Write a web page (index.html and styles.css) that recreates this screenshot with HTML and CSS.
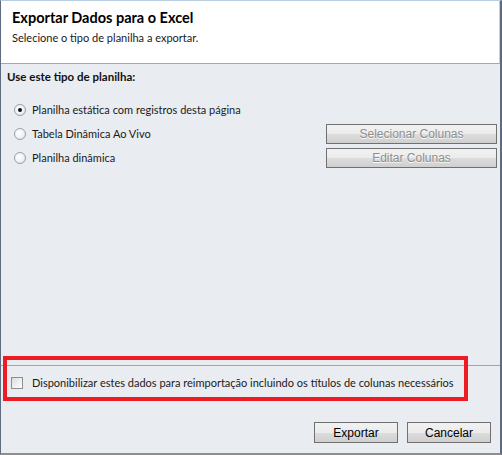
FILE: index.html
```html
<!DOCTYPE html>
<html lang="pt">
<head>
<meta charset="utf-8">
<title>Exportar Dados para o Excel</title>
<link rel="stylesheet" href="styles.css">
</head>
<body>
<div class="dialog">
  <div class="header">
    <div class="title">Exportar Dados para o Excel</div>
    <div class="subtitle">Selecione o tipo de planilha a exportar.</div>
  </div>
  <div class="main">
    <div class="section-label">Use este tipo de planilha:</div>
    <div class="options">
      <div class="option">
        <span class="radio checked"></span>
        <span class="opt-text">Planilha estática com registros desta página</span>
      </div>
      <div class="option">
        <span class="radio"></span>
        <span class="opt-text">Tabela Dinâmica Ao Vivo</span>
        <button class="btn side" disabled>Selecionar Colunas</button>
      </div>
      <div class="option">
        <span class="radio"></span>
        <span class="opt-text">Planilha dinâmica</span>
        <button class="btn side" disabled>Editar Colunas</button>
      </div>
    </div>
  </div>
  <div class="reimport">
    <span class="checkbox"></span>
    <span class="opt-text">Disponibilizar estes dados para reimportação incluindo os títulos de colunas necessários</span>
    <div class="highlight"></div>
  </div>
  <div class="footer">
    <button class="btn action">Exportar</button>
    <button class="btn action">Cancelar</button>
  </div>
</div>
</body>
</html>
```
FILE: styles.css
```css
html, body {
  margin: 0;
  padding: 0;
  background: #e9ecf0;
}

.dialog {
  box-sizing: border-box;
  width: 502px;
  height: 455px;
  display: flex;
  flex-direction: column;
  background: #e9ecf0;
  border-left: 1px solid #5d6b7f;
  border-right: 2px solid #5d6b7f;
  border-top: 1px solid #b9cde3;
  border-bottom: 2px solid #8e8e8e;
  font-family: Lato, "Open Sans", sans-serif;
  color: #1a1a1a;
}

.header {
  box-sizing: border-box;
  height: 63px;
  background: #ffffff;
  border-bottom: 1px solid #a0a8b2;
  border-right: 1px solid #c9ced6;
  padding: 8px 0 0 11px;
}

.title {
  font-size: 14.5px;
  font-weight: 700;
  color: #000;
  line-height: 18px;
}

.subtitle {
  font-size: 11px;
  line-height: 16px;
  margin-top: 3px;
  color: #1a1a1a;
}

.main {
  flex: 1;
  padding: 5px 0 0 6px;
}

.section-label {
  font-size: 11.5px;
  font-weight: 700;
  line-height: 16px;
  color: #111;
}

.options {
  margin-top: 15px;
  display: flex;
  flex-direction: column;
  gap: 4px;
}

.option {
  display: flex;
  align-items: center;
  height: 20px;
}

.opt-text {
  font-size: 11px;
  line-height: 16px;
  color: #1a1a1a;
}

.radio {
  box-sizing: border-box;
  width: 12px;
  height: 12px;
  margin: 0 6px 0 7px;
  border-radius: 50%;
  border: 1px solid #9aa0a8;
  background: radial-gradient(circle at 40% 40%, #ffffff 0%, #eef0f3 60%, #cfd3d8 100%);
  position: relative;
  flex: none;
}

.radio.checked::after {
  content: "";
  position: absolute;
  left: 3px;
  top: 3px;
  width: 4px;
  height: 4px;
  border-radius: 50%;
  background: #111;
}

.btn {
  box-sizing: border-box;
  font-family: "Liberation Sans", Arial, sans-serif;
  font-size: 12px;
  border: 1px solid #707070;
  border-radius: 0;
  background: linear-gradient(#f2f2f2 0%, #ebebeb 50%, #dddddd 51%, #cfcfcf 100%);
  padding: 0;
  color: #000;
}

.btn.side {
  margin-left: auto;
  margin-right: 3px;
  width: 171px;
  height: 20px;
  color: #8d8d8d;
  text-shadow: 0 1px 0 #fafafa;
}

.reimport {
  position: relative;
  height: 34px;
  border-top: 1px solid #a0a5ab;
  display: flex;
  align-items: center;
  margin-bottom: 22px;
}

.checkbox {
  box-sizing: border-box;
  width: 12px;
  height: 12px;
  margin: 0 9px 0 10px;
  border: 1px solid #8f8f8f;
  background: linear-gradient(135deg, #dcdcdc, #ffffff);
  flex: none;
}

.highlight {
  position: absolute;
  left: 2px;
  top: -10px;
  width: 465px;
  height: 45px;
  box-sizing: border-box;
  border: 4px solid #ed1c24;
  pointer-events: none;
}

.footer {
  display: flex;
  justify-content: flex-end;
  gap: 9px;
  padding: 0 9px 10px 0;
}

.btn.action {
  width: 84px;
  height: 21px;
}
```
